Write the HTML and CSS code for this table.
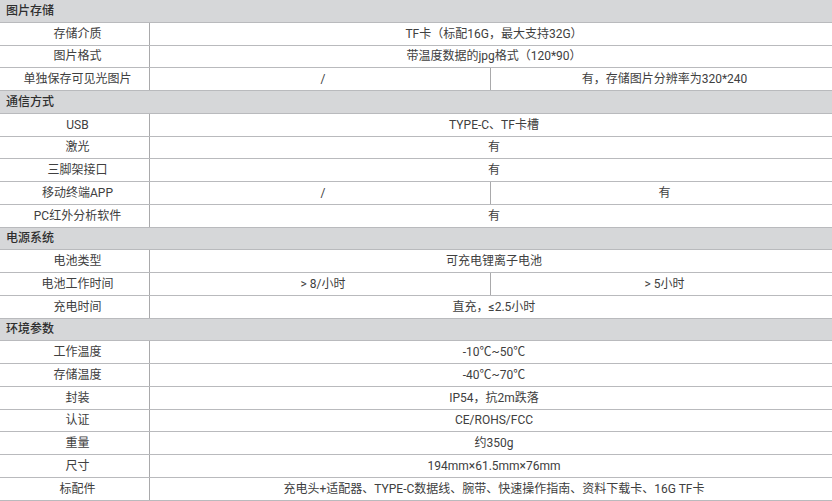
FILE: index.html
```html
<!DOCTYPE html>
<html lang="zh-CN">
<head>
<meta charset="utf-8">
<title>参数</title>
<link rel="stylesheet" href="styles.css">
</head>
<body>
<div class="spec">
  <div class="row head"><div class="cell">图片存储</div></div>
  <div class="row"><div class="cell label">存储介质</div><div class="cell">TF卡（标配16G，最大支持32G）</div></div>
  <div class="row"><div class="cell label">图片格式</div><div class="cell">带温度数据的jpg格式（120*90）</div></div>
  <div class="row split"><div class="cell label">单独保存可见光图片</div><div class="cell">/</div><div class="cell">有，存储图片分辨率为320*240</div></div>

  <div class="row head"><div class="cell">通信方式</div></div>
  <div class="row"><div class="cell label">USB</div><div class="cell">TYPE-C、TF卡槽</div></div>
  <div class="row"><div class="cell label">激光</div><div class="cell">有</div></div>
  <div class="row"><div class="cell label">三脚架接口</div><div class="cell">有</div></div>
  <div class="row split"><div class="cell label">移动终端APP</div><div class="cell">/</div><div class="cell">有</div></div>
  <div class="row"><div class="cell label">PC红外分析软件</div><div class="cell">有</div></div>

  <div class="row head"><div class="cell">电源系统</div></div>
  <div class="row"><div class="cell label">电池类型</div><div class="cell">可充电锂离子电池</div></div>
  <div class="row split"><div class="cell label">电池工作时间</div><div class="cell">&gt; 8/小时</div><div class="cell">&gt; 5小时</div></div>
  <div class="row"><div class="cell label">充电时间</div><div class="cell">直充，≤2.5小时</div></div>

  <div class="row head"><div class="cell">环境参数</div></div>
  <div class="row"><div class="cell label">工作温度</div><div class="cell">-10℃~50℃</div></div>
  <div class="row"><div class="cell label">存储温度</div><div class="cell">-40℃~70℃</div></div>
  <div class="row"><div class="cell label">封装</div><div class="cell">IP54，抗2m跌落</div></div>
  <div class="row"><div class="cell label">认证</div><div class="cell">CE/ROHS/FCC</div></div>
  <div class="row"><div class="cell label">重量</div><div class="cell">约350g</div></div>
  <div class="row"><div class="cell label">尺寸</div><div class="cell">194mm×61.5mm×76mm</div></div>
  <div class="row"><div class="cell label">标配件</div><div class="cell">充电头+适配器、TYPE-C数据线、腕带、快速操作指南、资料下载卡、16G TF卡</div></div>
</div>
</body>
</html>
```

FILE: styles.css
```css
html, body {
  margin: 0;
  padding: 0;
  background: #ffffff;
}

.spec {
  width: 832px;
  font-family: Roboto, "Noto Sans CJK SC", sans-serif;
  font-size: 12px;
  color: #404040;
}

.row {
  display: grid;
  grid-template-columns: 150px 1fr;
  height: 22.75px;
  box-sizing: border-box;
  border-bottom: 1px solid #b9babd;
}

.row.split {
  grid-template-columns: 150px 341px 1fr;
}

.cell {
  display: flex;
  align-items: center;
  justify-content: center;
  padding-left: 6px;
  box-sizing: border-box;
  white-space: nowrap;
  line-height: 1;
}

.cell.label,
.row.split .cell:nth-child(2) {
  border-right: 1px solid #a9a9ab;
}

.row.head {
  display: flex;
  background: #d6d7d9;
}

.row.head .cell {
  justify-content: flex-start;
  padding-left: 6px;
  font-weight: 500;
  color: #2e2e2e;
}
```
